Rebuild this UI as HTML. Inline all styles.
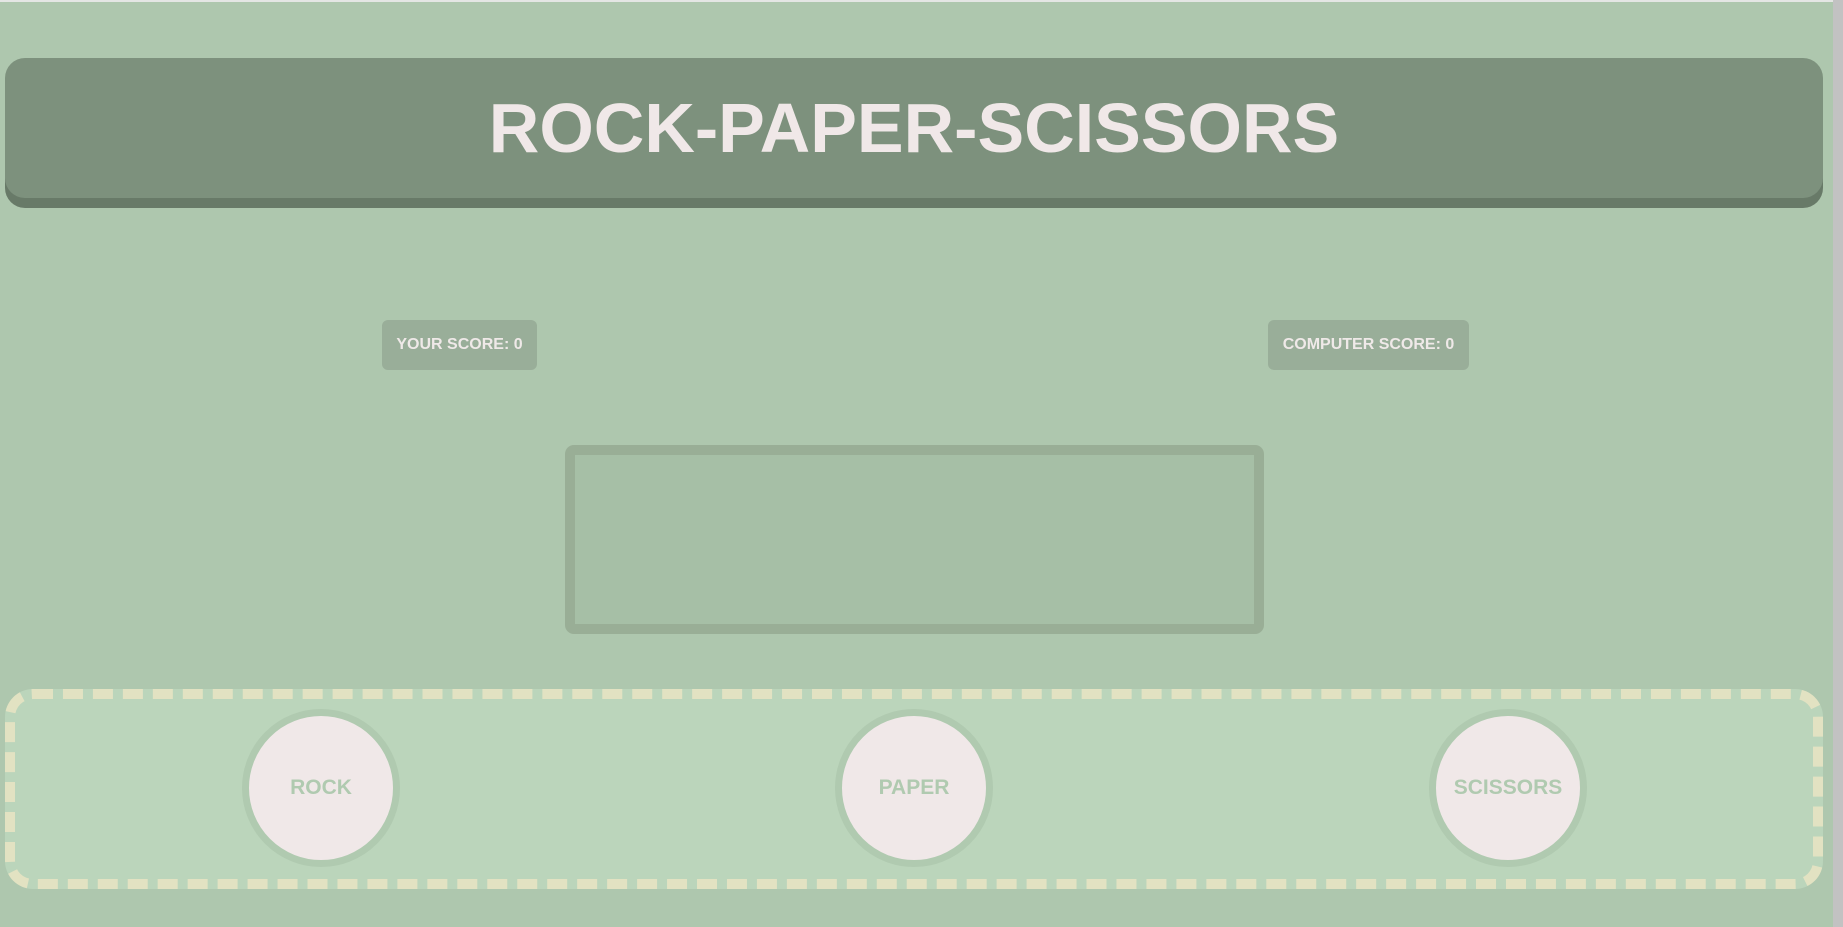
<!DOCTYPE html>
<html><head><meta charset="utf-8"><style>
html,body{margin:0;padding:0;}
body{width:1843px;height:927px;background:#aec7ae;position:relative;overflow:hidden;font-family:"Liberation Sans",Arial,sans-serif;}
.topline{position:absolute;left:0;top:0;width:1843px;height:2px;background:#e4e6e4;}
.sb{position:absolute;left:1833px;top:0;width:10px;height:927px;background:#c2c2c2;}
.header{position:absolute;left:5px;top:58px;width:1818px;height:140px;background:#7d917d;border-radius:20px;box-shadow:0 10px 0 #687a68;text-align:center;}
.header h1{margin:0;line-height:140px;font-size:70px;font-weight:bold;color:#f0e8e8;}
.score{position:absolute;top:320px;height:50px;background:#99ae99;border-radius:6px;color:#efe9e8;font-weight:bold;font-size:16px;line-height:50px;text-align:center;}
.result{position:absolute;left:565px;top:445px;width:679px;height:169px;border:10px solid #99ae96;background:#a6bfa6;border-radius:9px;}
.choices{position:absolute;left:5px;top:689px;width:1798px;height:180px;border:10px dashed #e2e2c2;background:#bbd5bb;border-radius:28px;}
.c{position:absolute;top:709px;width:144px;height:144px;border:7px solid #b0cab0;border-radius:50%;background:#f0e8e8;color:#b0cab0;font-weight:bold;font-size:21px;line-height:144px;text-align:center;}
</style></head><body>
<div class="topline"></div>
<div class="header"><h1>ROCK-PAPER-SCISSORS</h1></div>
<div class="score" style="left:382px;width:155px;">YOUR SCORE: 0</div>
<div class="score" style="left:1268px;width:201px;">COMPUTER SCORE: 0</div>
<div class="result"></div>
<div class="choices"></div>
<div class="c" style="left:242px;">ROCK</div>
<div class="c" style="left:835px;">PAPER</div>
<div class="c" style="left:1429px;">SCISSORS</div>
<div class="sb"></div>
</body></html>
